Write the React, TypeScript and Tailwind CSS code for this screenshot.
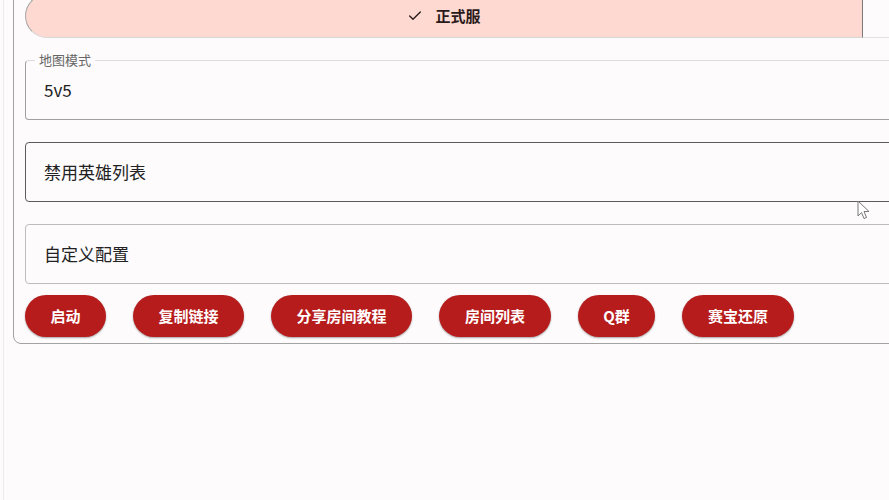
import { Check } from "lucide-react";

const actions = [
  { label: "启动", w: "w-[81px]" },
  { label: "复制链接", w: "w-[111px]" },
  { label: "分享房间教程", w: "w-[141px]" },
  { label: "房间列表", w: "w-[112px]" },
  { label: "Q群", w: "w-[77px]" },
  { label: "赛宝还原", w: "w-[112px]" },
];

const font = { fontFamily: '"Noto Sans CJK SC", "Noto Sans", sans-serif' };

function Field({
  label,
  value,
  border,
}: {
  label?: string;
  value: string;
  border: string;
}) {
  return (
    <div className={`relative flex h-[60px] items-center rounded-[4px] border px-[18px] ${border}`}>
      {label && (
        <span className="absolute -top-[9px] left-[9px] bg-[#fdfbfc] px-1 text-[13px] leading-4 text-[#666]">
          {label}
        </span>
      )}
      <span className="text-[17px] text-[#222]">{value}</span>
    </div>
  );
}

export default function App() {
  return (
    <div className="relative h-[500px] overflow-hidden bg-[#fdfbfc]" style={font}>
      <div className="ml-[3px] flow-root h-full border-l border-[#ececec] pl-[9px]">
        <div className="-mt-[19px] w-[1000px] rounded-lg border border-[#a3a3a3] px-[11px] pb-[6px] pt-3">
          {/* server toggle */}
          <div className="flex h-[44px]">
            <div className="flex w-[837px] items-center justify-center gap-3 rounded-l-full border border-r-0 border-[#a8a8a8] border-b-[#d6d6d6] bg-[#fdd9d1] text-[15px] font-bold text-[#2a1a1a]">
              <Check className="h-4 w-4" strokeWidth={2} />
              <span>正式服</span>
            </div>
            <div className="flex-1 border-l border-b border-[#7a7a7a] border-b-[#e2e2e2]" />
          </div>

          <div className="mt-[22px] flex flex-col gap-[22px]">
            <Field label="地图模式" value="5v5" border="border-[#a0a0a0] border-t-[#dcdcdc]" />
            <Field value="禁用英雄列表" border="border-[#5c5c5c]" />
            <Field value="自定义配置" border="border-[#bdbdbd]" />
          </div>

          <div className="mt-[11px] flex gap-[27px]">
            {actions.map((a) => (
              <button
                key={a.label}
                className={`h-[42px] rounded-full bg-[#b71c1c] text-[15px] font-bold text-white shadow-[0_1px_2px_rgba(0,0,0,0.35)] ${a.w}`}
              >
                {a.label}
              </button>
            ))}
          </div>
        </div>
      </div>

      {/* mouse pointer */}
      <svg className="absolute left-[857px] top-[200px]" width="14" height="20" viewBox="0 0 14 20">
        <path
          d="M1 1 L1 16 L4.5 12.5 L7 18.5 L9.5 17.5 L7 11.5 L12 11.5 Z"
          fill="#fff"
          stroke="#777"
          strokeWidth="1"
          strokeLinejoin="round"
        />
      </svg>
    </div>
  );
}
